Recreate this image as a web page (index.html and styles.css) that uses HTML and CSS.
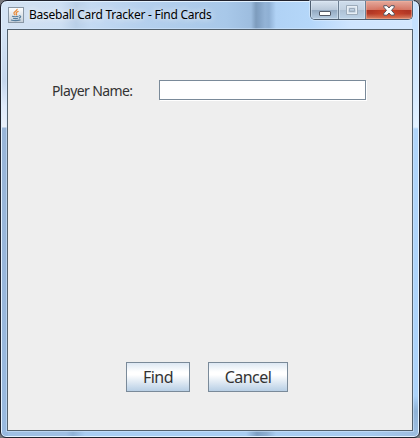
FILE: index.html
```html
<!DOCTYPE html>
<html lang="en">
<head>
<meta charset="utf-8">
<title>Baseball Card Tracker - Find Cards</title>
<link rel="stylesheet" href="styles.css">
</head>
<body>
<div class="window">
  <header class="titlebar">
    <svg class="java" width="16" height="16" viewBox="0 0 16 16">
      <defs><linearGradient id="tile" x2="0" y2="1"><stop stop-color="#fff"/><stop offset="1" stop-color="#c3ced8"/></linearGradient></defs>
      <rect x=".5" y=".5" width="15" height="15" fill="url(#tile)" stroke="#8997a5"/>
      <path d="M9.2 1.8C9.6 4 5 4.6 6 6.6L7.2 8.2M10.6 4.3C7.6 5.4 7.9 6.3 8.5 7Q8.8 7.7 8.2 8.3" fill="none" stroke="#e88a38" stroke-width="1.2"/>
      <path d="M4 9.3Q7 10.2 10.6 9.3M5 11.3Q7.5 12 10 11.3M11 8.8Q13.4 8.6 12.4 10.3L10.9 11.3M3 13Q7.5 14.2 12.5 12.9" fill="none" stroke="#557d9d" stroke-width="1.1"/>
    </svg>
    <h1 class="title">Baseball Card Tracker - Find Cards</h1>
    <div class="controls">
      <span class="control minimize"><svg width="12" height="5"><rect x=".5" y=".5" width="11" height="4" rx=".5" fill="#fff" stroke="#515967"/></svg></span>
      <span class="control maximize"><svg width="12" height="10"><rect x="1.5" y="1.5" width="9" height="7" fill="none" stroke="#e7eef5" stroke-width="2"/><path d="M.5.5h11v9H.5zM3.5 3.5h5v3h-5z" fill="none" stroke="#9cabba"/></svg></span>
      <span class="control close"><svg width="12" height="11" viewBox="0 0 12 11"><path d="M.8.7H4L6 3 8 .7h3.2v1.5L8.5 5.4l2.7 3v1.8H8L6 8l-2 2.2H.8V8.4l2.7-3L.8 2.2z" fill="#fff" stroke="#52535f"/></svg></span>
    </div>
  </header>
  <main class="content">
    <div class="field"><label class="label" for="player">Player Name:</label><input class="input" id="player" type="text"></div>
    <div class="actions"><button class="button find"><span>Find</span></button><button class="button cancel"><span>Cancel</span></button></div>
  </main>
</div>
</body>
</html>
```
FILE: styles.css
```css
* { box-sizing: border-box; }
body { margin: 0; background: #77777b; overflow: hidden; }
.window {
  width: 420px; height: 438px; padding: 0 6px 6px;
  border: 1px solid #20222d; border-radius: 7px 7px 6px 6px;
  box-shadow: inset 0 0 0 1px #e2f1ff;
  background:
    linear-gradient(#d5e4f5 28px, #c5d6ec 80px, #dfeafa 105px, #e9f0fa 126px, #98b5d8 127px, #98b9df 100%) 0 0 / 7px 100% no-repeat,
    linear-gradient(#c5e1fe 28px, #d9ecff 100px, #e4f2ff 126px, #b0d5fa 128px, #acd3fa 395px, #8fb2d6 410px, #9ebfe2 100%) 100% 0 / 7px 100% no-repeat,
    linear-gradient(90deg, #9fbfe3, #9fbfe3 65px, #8fb1d6 72px, #a9cdf2 84px, #a9cdf2 245px, #7d9fc4 256px, #8eafd2 266px, #a9cdf2 275px, #a6c9ee 370px, #9ebde0) 0 100% / 100% 7px no-repeat,
    linear-gradient(90deg, #d3e1f1 0, #cddff3 60px, #bad0e8 75px, #c4daf2 90px, #b5d0ed 140px, #a8c8e9 225px, #9dbddf 250px, #7d9cbd 255px, #85a5c8 259px, #93b3d6 264px, #8fb0d4 268px, #b0d2f5 275px, #b5d7f9 310px, #cfe5fe 350px, #d3e7fe 100%);
}
.titlebar { height: 28px; display: flex; align-items: flex-start; padding-left: 1px; }
.java { margin-top: 6px; flex: none; }
.title {
  margin: 5px 0 0 5px; font: 12px/18px "Noto Sans", sans-serif;
  color: #000; white-space: nowrap; letter-spacing: -.25px; width: 182px;
  text-shadow: 0 0 6px #ffffffb0, 0 0 9px #ffffff90;
}
.controls {
  display: flex; height: 19px; width: 103px; margin: 0 0 0 auto;
  border: 1px solid #4e5e70; border-top: 0; border-radius: 0 0 5px 5px;
  box-shadow: 0 0 0 1px #dceeff90; overflow: hidden;
}
.control {
  display: flex; align-items: center; justify-content: center;
  width: 27px; border-right: 1px solid #6c7e91;
  background: linear-gradient(#d8e3ef, #bac9da 48%, #92a8c0 50%, #b6cce2);
  box-shadow: inset 0 0 0 1px #e0ecf780;
}
.minimize { width: 28px; padding-top: 6px; }
.maximize { background: linear-gradient(#cfddec, #c2d1e1 48%, #adc0d4 50%, #bdd3e8); }
.close {
  flex: 1; border: 0; padding-top: 1px;
  background:
    radial-gradient(ellipse 18px 9px at 50% 70%, #e8552c90, #e8552c00),
    linear-gradient(#e5a99c, #d47867 48%, #ae3322 50%, #b53a27 70%, #d98869);
  box-shadow: inset 0 0 0 1px #f4b4a080;
}
.content {
  height: 402px; border: 1px solid #53616d; background: #eee;
  display: flex; flex-direction: column; justify-content: space-between;
  padding: 50px 0 38px; box-shadow: 0 0 0 1px #d6eaff80;
}
.field { display: flex; align-items: flex-start; height: 21px; padding-left: 44px; }
.label { width: 107px; font: 14px/21px "Noto Sans", sans-serif; color: #333; letter-spacing: -.6px; white-space: nowrap; }
.input {
  width: 207px; height: 20px; margin: 0; padding: 0 3px; border: 1px solid #7a8a99; border-radius: 0;
  background: #fff; box-shadow: 1px 1px #fff; outline: 0;
}
.actions { display: flex; gap: 18px; padding-left: 118px; }
.button {
  height: 30px; padding: 0; border: 1px solid #7a8a99; border-radius: 0;
  background: linear-gradient(#dde8f3, #fff 32%, #fff 42%, #b8cfe5);
  font: 16px/28px "Noto Sans", sans-serif; color: #333; letter-spacing: -.55px;
}
.find { width: 64px; }
.cancel { width: 80px; }
```
